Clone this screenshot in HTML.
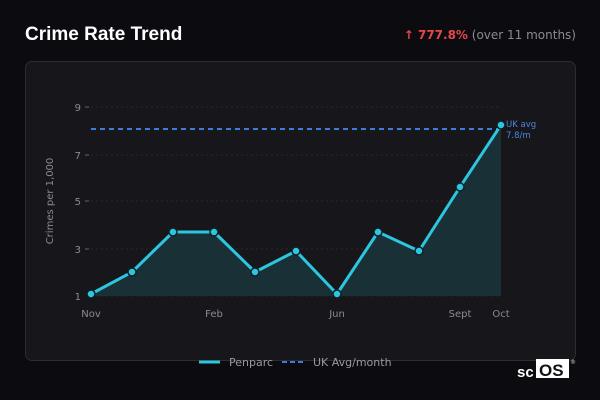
<html><head><style>
body{margin:0;width:600px;height:400px;background:#0c0b10;font-family:"DejaVu Sans","Liberation Sans",sans-serif;position:relative;overflow:hidden}
.t{position:absolute;left:25px;top:24px;color:#fff;font-weight:bold;font-size:19px;font-family:"Liberation Sans",sans-serif}
.r{position:absolute;right:24px;top:28px;font-size:12px;color:#8a8a90}
.r b{color:#e54848}
.card{position:absolute;left:25px;top:61px;width:549px;height:298px;background:#17171b;border:1px solid #2c2c31;border-radius:7px}
</style></head><body>
<div class="t">Crime Rate Trend</div>
<div class="r"><b>↑ 777.8%</b> (over 11 months)</div>
<div class="card"></div>
<svg width="600" height="400" style="position:absolute;left:0;top:0" font-family="DejaVu Sans, sans-serif">
<g stroke="#2a2a2e" stroke-dasharray="2,3"><line x1="91" x2="501" y1="107" y2="107"/><line x1="91" x2="501" y1="155" y2="155"/><line x1="91" x2="501" y1="201" y2="201"/><line x1="91" x2="501" y1="249" y2="249"/><line x1="91" x2="501" y1="296" y2="296"/></g>
<g fill="#8a8a90" font-size="10" text-anchor="end"><text x="81" y="111">9</text><text x="81" y="159">7</text><text x="81" y="205">5</text><text x="81" y="253">3</text><text x="81" y="300">1</text></g>
<g stroke="#666" ><line x1="85" x2="89" y1="107" y2="107"/><line x1="85" x2="89" y1="155" y2="155"/><line x1="85" x2="89" y1="201" y2="201"/><line x1="85" x2="89" y1="249" y2="249"/></g>
<text x="53" y="201" fill="#8a8a90" font-size="10" text-anchor="middle" transform="rotate(-90 53 201)">Crimes per 1,000</text>
<g fill="#8a8a90" font-size="10" text-anchor="middle"><text x="91" y="317">Nov</text><text x="214" y="317">Feb</text><text x="337" y="317">Jun</text><text x="460" y="317">Sept</text><text x="501" y="317">Oct</text></g>
<polygon points="91,294 132,272 173,232 214,232 255,272 296,251 337,294 378,232 419,251 460,187 501,125 501,296 91,296" fill="#1a3a40" opacity="0.75"/>
<line x1="91" x2="501" y1="129" y2="129" stroke="#3b7dd8" stroke-width="2" stroke-dasharray="5,4"/>
<polyline points="91,294 132,272 173,232 214,232 255,272 296,251 337,294 378,232 419,251 460,187 501,125" fill="none" stroke="#2cc6e0" stroke-width="3" stroke-linejoin="round"/>
<g fill="#2cc6e0" stroke="#102024" stroke-width="1.5"><circle cx="91" cy="294" r="4"/><circle cx="132" cy="272" r="4"/><circle cx="173" cy="232" r="4"/><circle cx="214" cy="232" r="4"/><circle cx="255" cy="272" r="4"/><circle cx="296" cy="251" r="4"/><circle cx="337" cy="294" r="4"/><circle cx="378" cy="232" r="4"/><circle cx="419" cy="251" r="4"/><circle cx="460" cy="187" r="4"/><circle cx="501" cy="125" r="4"/></g>
<g fill="#4a86e0" font-size="8.5"><text x="506" y="127">UK avg</text><text x="506" y="138">7.8/m</text></g>
<line x1="199" x2="220" y1="362" y2="362" stroke="#2cc6e0" stroke-width="3"/>
<text x="229" y="366" fill="#9a9aa0" font-size="11">Penparc</text>
<line x1="282" x2="305" y1="362" y2="362" stroke="#3b7dd8" stroke-width="2" stroke-dasharray="5,3"/>
<text x="313" y="366" fill="#9a9aa0" font-size="11">UK Avg/month</text>
<text x="517" y="377" fill="#fff" font-size="15" font-weight="bold" font-family="Liberation Sans, sans-serif">sc</text>
<rect x="536" y="359" width="33" height="19" fill="#fff"/>
<text x="539" y="376" fill="#111" font-size="17" font-weight="bold" font-family="Liberation Sans, sans-serif">OS</text>
<text x="570" y="364" fill="#ccc" font-size="6">®</text>
</svg>
</body></html>
